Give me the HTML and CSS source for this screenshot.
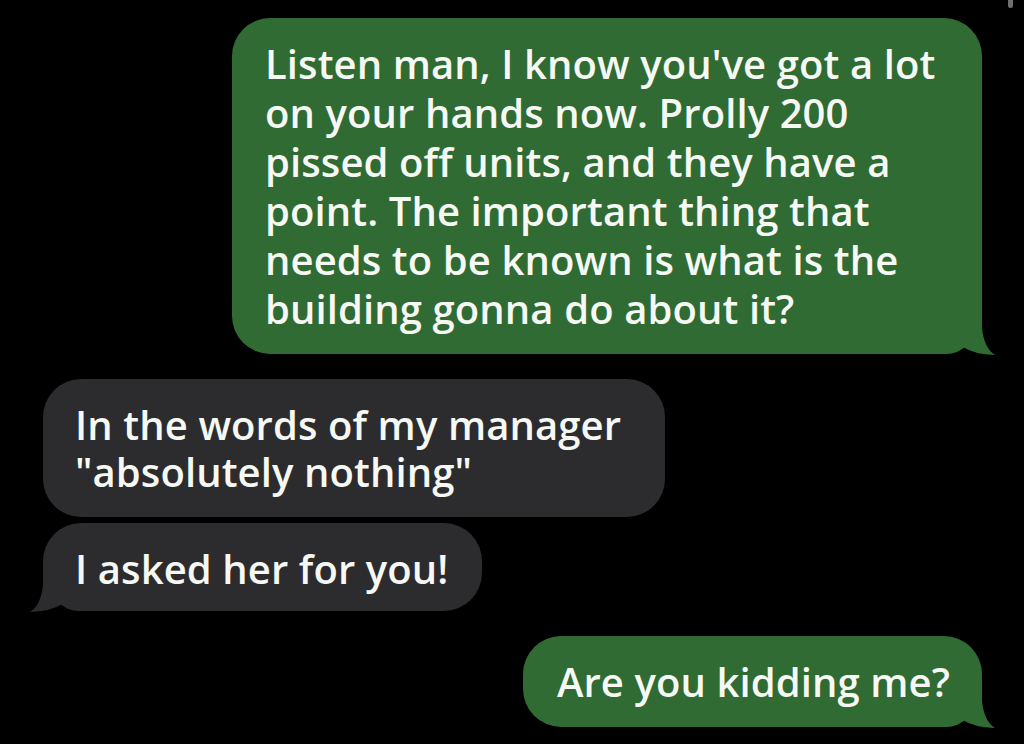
FILE: index.html
```html
<!DOCTYPE html>
<html>
<head>
<meta charset="utf-8">
<link rel="stylesheet" href="styles.css">
</head>
<body>
<div class="scroll-thumb"></div>
<main class="thread">
  <div class="bubble sent first">Listen man, I know you've got a lot<br>on your hands now. Prolly 200<br>pissed off units, and they have a<br>point. The important thing that<br>needs to be known is what is the<br>building gonna do about it?<svg class="tail" viewBox="0 0 60 44" width="60" height="44"><path d="M0,44 L6,44 Q18,44 23,37 Q33,44 55,45 Q44,38 42,18 L42,0 L0,0 Z"/></svg></div>
  <div class="group">
    <div class="bubble received">In the words of my manager<br>"absolutely nothing"</div>
    <div class="bubble received short">I asked her for you!<svg class="tail" viewBox="0 0 60 44" width="60" height="44"><path d="M0,44 L6,44 Q18,44 23,37 Q33,44 55,45 Q44,38 42,18 L42,0 L0,0 Z"/></svg></div>
  </div>
  <div class="bubble sent last">Are you kidding me?<svg class="tail" viewBox="0 0 60 44" width="60" height="44"><path d="M0,44 L6,44 Q18,44 23,37 Q33,44 55,45 Q44,38 42,18 L42,0 L0,0 Z"/></svg></div>
</main>
</body>
</html>
```

FILE: styles.css
```css
html, body {
  margin: 0;
  padding: 0;
  background: #000;
  height: 744px;
  overflow: hidden;
}
body {
  font-family: "Open Sans", "Liberation Sans", sans-serif;
  color: #f6f8f4;
}
.scroll-thumb {
  position: absolute;
  top: -4px;
  right: 11px;
  width: 5px;
  height: 12px;
  border-radius: 3px;
  background: #6f6f6f;
}
.thread {
  display: flex;
  flex-direction: column;
  padding-top: 18px;
}
.group {
  display: flex;
  flex-direction: column;
  align-items: flex-start;
  gap: 6px;
  margin-top: 25px;
}
.bubble {
  position: relative;
  z-index: 0;
  border-radius: 38px;
  font-weight: 600;
  font-size: 40px;
  box-sizing: border-box;
  white-space: nowrap;
  letter-spacing: 0.1px;
}
.sent {
  background: #2f6b33;
  fill: #2f6b33;
  align-self: flex-end;
  margin-right: 42px;
}
.received {
  background: #2c2c2e;
  fill: #2c2c2e;
  margin-left: 43px;
  line-height: 47px;
  padding: 22px 44px 22px 32px;
}
.received.short {
  padding: 22px 34px 19px 32px;
}
.first {
  width: 750px;
  line-height: 49px;
  padding: 21px 20px 21px 33px;
}
.last {
  margin-top: 25px;
  line-height: 47px;
  padding: 22px 32px 22px 34px;
}
.tail {
  position: absolute;
  bottom: 0;
  z-index: -1;
  display: block;
  overflow: visible;
}
.sent .tail {
  right: -18px;
}
.received .tail {
  left: -18px;
  transform: scaleX(-1);
}
```
